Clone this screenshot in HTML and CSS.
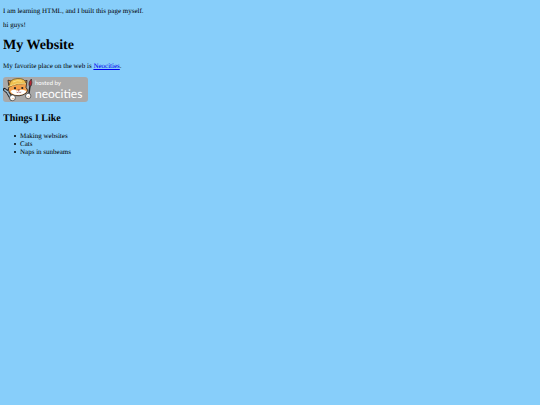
FILE: index.html
```
<!DOCTYPE html>
<html lang="en">
<head>
    <meta charset="UTF-8">
    <meta name="viewport" content="width=device-width, initial-scale=1.0">
    <title>My Website</title>
    <link rel="stylesheet" href="styles.css">
</head>
<body>
    <p>I am learning HTML, and I built this page myself.</p>
    <p>hi guys!</p>

    <h1>My Website</h1>
    <p>My favorite place on the web is <a href="https://neocities.org">Neocities</a>.</p>

    <a class="badge" href="https://neocities.org" aria-label="Hosted by Neocities">
      <svg class="badge-cat" viewBox="0 0 30 25" aria-hidden="true">
        <!-- wrench -->
        <path d="M1.5 12.5l3 2.5 2-2M4.5 15l4 7" fill="none" stroke="#222" stroke-width="3.2" stroke-linecap="round"/>
        <path d="M1.8 12.8l2.8 2.2 1.6-1.8M4.5 15l4 6.6" fill="none" stroke="#9fb8cb" stroke-width="1.5" stroke-linecap="round"/>
        <!-- head and ears -->
        <path d="M6 10L5 3.2l4 1.2q6-4.5 11 .2l4-1.2-1 7q3 3 .5 5.5-7 5-15 1.5Q4 14 6 10z" fill="#f4a04b" stroke="#332b25" stroke-width=".9" stroke-linejoin="round"/>
        <path d="M7.5 14.2q3-2.5 6.5-.5 4-2.2 9.5.2-1.5 4-9 4-5.5-.2-7-3.7z" fill="#fff"/>
        <!-- helmet -->
        <path d="M6.3 9q0-7 8-7.4Q22 1 23 6.3q-4 1-7.5 1Q10 7.5 6.3 10z" fill="#f0c050" stroke="#5c4820" stroke-width=".7"/>
        <path d="M10 5q4-2.3 9-.8M5 9.5q8-3.8 18-2.8" fill="none" stroke="#fbe28a" stroke-width=".9"/>
        <circle cx="12" cy="11.2" r="1.1" fill="#222"/>
        <circle cx="19.3" cy="11" r="1.1" fill="#222"/>
        <path d="M14.8 12.7h2l-1 1zM13.5 15q1.3 1 2.3-.2 1 1.2 2.5.2" fill="#d44" stroke="#633" stroke-width=".4"/>
        <!-- brush -->
        <path d="M25.6 19L27 9" stroke="#252525" stroke-width="1.5"/>
        <path d="M26 8.5q-.7-4 2.4-6.5 1.2 4-.3 7z" fill="#b62431" stroke="#333" stroke-width=".7"/>
        <!-- paws -->
        <circle cx="9.5" cy="20.8" r="2.9" fill="#fff" stroke="#333" stroke-width=".7"/>
        <circle cx="25.2" cy="19" r="2.7" fill="#fff" stroke="#333" stroke-width=".7"/>
        <path d="M9 21.8l1.8-.4M24.5 20l1.6-.4" stroke="#e5a06b" stroke-width=".7"/>
      </svg>
      <span class="badge-text">
        <span class="badge-small">hosted by</span>
        <span class="badge-name">neocities</span>
      </span>
    </a>

    <h2>Things I Like</h2>
    <ul>
      <li>Making websites</li>
      <li>Cats</li>
      <li>Naps in sunbeams</li>
    </ul>
</body>
</html>
```
FILE: styles.css
```
body {
  margin: 7px 3px;
  background-color: #87cefa;
  color: #000;
  font-family: "Liberation Serif", "Times New Roman", serif;
  font-size: 7px;
  line-height: 8px;
  text-rendering: geometricPrecision;
}

p {
  margin: 0 0 6px;
}

h1 {
  margin: 9px 0 8px;
  font-size: 14px;
  line-height: 16px;
}

h2 {
  margin: 11px 0 7px;
  font-size: 10px;
  line-height: 12px;
}

ul {
  margin: 0;
  padding-left: 11px;
  list-style: none;
}

li {
  display: flex;
  align-items: center;
  gap: 4px;
}

li::before {
  content: "";
  width: 2px;
  height: 2px;
  border-radius: 50%;
  background-color: #000;
}

.badge {
  display: flex;
  width: 85px;
  height: 25px;
  margin-top: 7px;
  border-radius: 3px;
  background-color: #a9a9a9;
  color: #fff;
  text-decoration: none;
}

.badge-cat {
  width: 30px;
  height: 25px;
}

.badge-text {
  display: flex;
  flex-direction: column;
  padding: 3px 0 0 2px;
  font-family: Lato, "Open Sans", sans-serif;
}

.badge-small {
  font-size: 6px;
  line-height: 7px;
}

.badge-name {
  font-size: 12px;
  line-height: 14px;
}
```
